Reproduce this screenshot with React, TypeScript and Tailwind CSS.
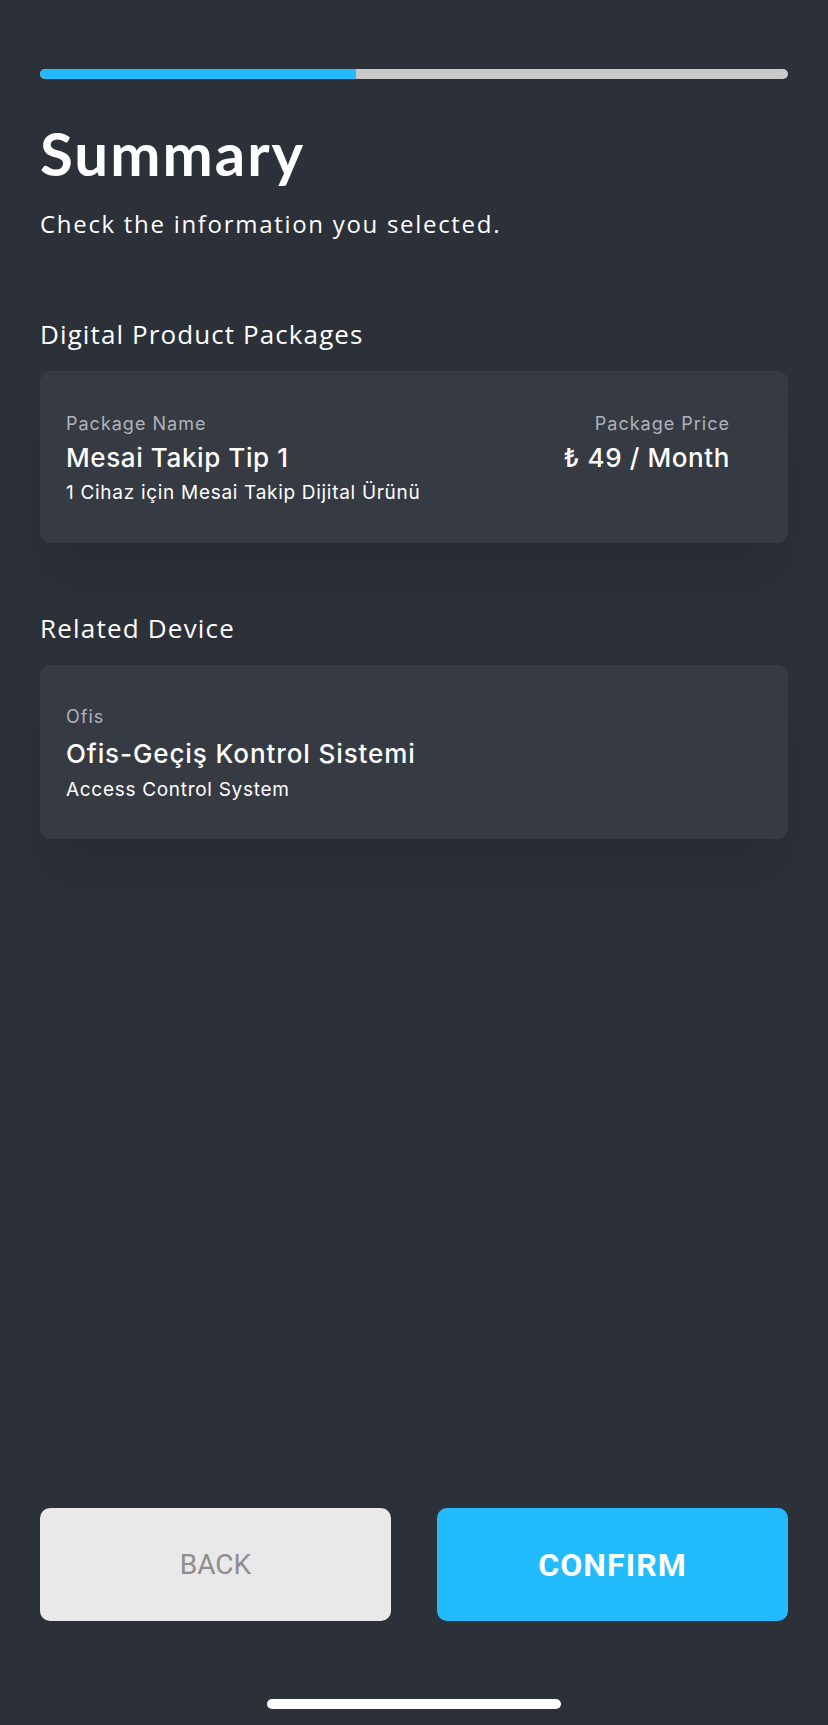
import React from "react";

const title = { fontFamily: "Lato, 'Open Sans', sans-serif" };
const head = { fontFamily: "'Open Sans', Lato, sans-serif" };
const body = { fontFamily: "Inter, Roboto, sans-serif" };
const btn = { fontFamily: "Roboto, 'Liberation Sans', sans-serif" };

export default function App() {
  return (
    <div className="w-[828px] h-[1725px] bg-[#2c3038] flex flex-col px-[40px] overflow-hidden">
      {/* progress */}
      <div className="mt-[69px] h-[10px] w-full rounded-full bg-[#c8c9cb] overflow-hidden flex">
        <div className="h-full w-[42.3%] rounded-l-full bg-[#22bbfd]" />
      </div>

      <h1 style={title} className="mt-[44px] text-[60px] leading-none font-bold text-white tracking-[2px]">
        Summary
      </h1>
      <p style={head} className="mt-[29px] text-[24px] leading-none text-white tracking-[1.7px]">
        Check the information you selected.
      </p>

      <h2 style={head} className="mt-[85px] text-[26px] leading-none text-white tracking-[1.1px]">
        Digital Product Packages
      </h2>
      <div className="mt-[24px] rounded-[10px] bg-[#363a43] pl-[26px] pr-[58px] pt-[44px] pb-[41px] flex justify-between shadow-[0_40px_50px_-10px_rgba(0,0,0,0.12)]">
        <div style={body} className="flex flex-col">
          <span className="text-[18px] leading-none text-[#aeb3bb] tracking-[1px]">Package Name</span>
          <span className="mt-[12px] text-[26px] leading-none text-white font-medium tracking-[0.6px]">Mesai Takip Tip 1</span>
          <span className="mt-[12px] text-[19px] leading-none text-white tracking-[0.7px]">
            1 Cihaz için Mesai Takip Dijital Ürünü
          </span>
        </div>
        <div style={body} className="flex flex-col items-end">
          <span className="text-[18px] leading-none text-[#aeb3bb] tracking-[1px]">Package Price</span>
          <span className="mt-[12px] text-[26px] leading-none text-white font-medium tracking-[0.6px]">₺ 49 / Month</span>
        </div>
      </div>

      <h2 style={head} className="mt-[72px] text-[26px] leading-none text-white tracking-[1.2px]">
        Related Device
      </h2>
      <div className="mt-[24px] rounded-[10px] bg-[#363a43] pl-[26px] pr-[58px] pt-[43px] pb-[40px] flex flex-col shadow-[0_40px_50px_-10px_rgba(0,0,0,0.12)]">
        <div style={body} className="flex flex-col">
          <span className="text-[18px] leading-none text-[#aeb3bb] tracking-[1px]">Ofis</span>
          <span className="mt-[15px] text-[26px] leading-none text-white font-medium tracking-[0.9px]">Ofis-Geçiş Kontrol Sistemi</span>
          <span className="mt-[13px] text-[19px] leading-none text-white tracking-[0.7px]">Access Control System</span>
        </div>
      </div>

      <div className="flex-1" />

      <div className="flex gap-[46px]">
        <button
          style={btn}
          className="flex-1 h-[113px] rounded-[10px] bg-[#e9e9ea] text-[#8e8e90] text-[28px] flex items-center justify-center"
        >
          BACK
        </button>
        <button
          style={btn}
          className="flex-1 h-[113px] rounded-[10px] bg-[#22bbfd] text-white font-bold text-[32px] tracking-[1.1px] flex items-center justify-center"
        >
          CONFIRM
        </button>
      </div>

      <div className="mt-[78px] mb-[16px] mx-auto w-[294px] h-[10px] rounded-full bg-white" />
    </div>
  );
}
